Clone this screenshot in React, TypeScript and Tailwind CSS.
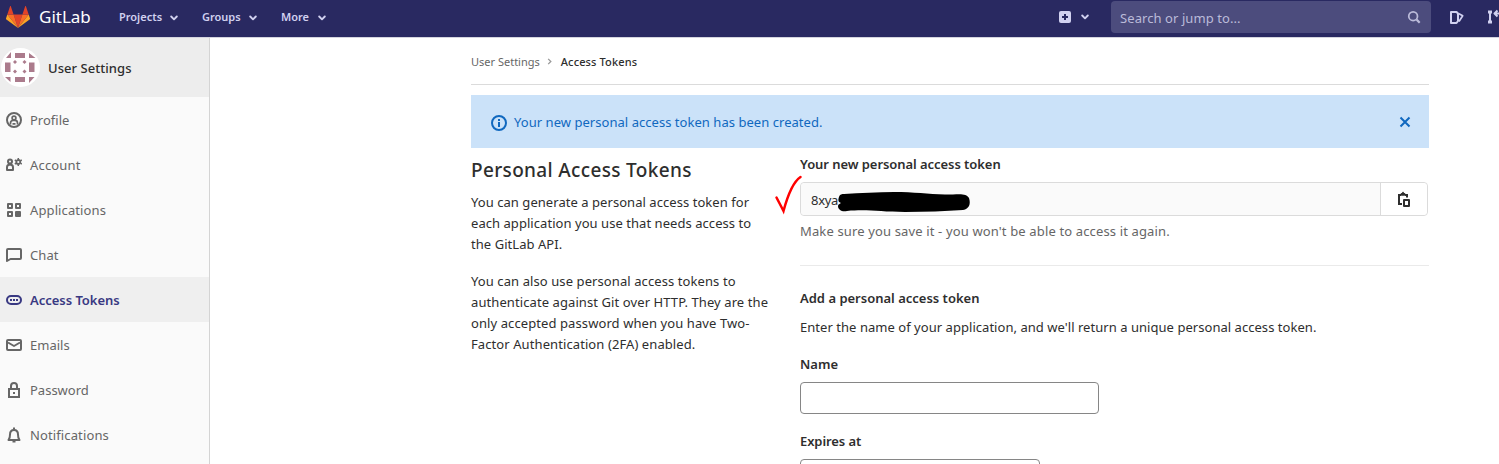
import React from 'react';

function Icon({ children, className = 'h-4 w-4' }: { children: React.ReactNode; className?: string }) {
  return (
    <svg viewBox="0 0 16 16" className={`shrink-0 ${className}`} fill="none" stroke="currentColor" strokeWidth="2" strokeLinejoin="round">
      {children}
    </svg>
  );
}

function Logo() {
  return (
    <svg viewBox="0 0 24 22" className="h-[22px] w-6 shrink-0">
      <path fill="#e24329" d="M12 22 16.4 8.4H7.6z" />
      <path fill="#fc6d26" d="M12 22 7.6 8.4H1.3z" />
      <path fill="#fca326" d="M1.3 8.4 0 12.5c-.1.4 0 .8.4 1L12 22z" />
      <path fill="#e24329" d="M1.3 8.4h6.3L4.9.4c-.2-.5-.8-.5-.9 0z" />
      <path fill="#fc6d26" d="m12 22 4.4-13.6h6.3z" />
      <path fill="#fca326" d="m22.700 8.400 1.300 4.100c.1.4 0 .8-.4 1L12 22z" />
      <path fill="#e24329" d="M22.700 8.400h-6.300L19.100.4c.2-.5.8-.5.9 0z" />
    </svg>
  );
}

function Avatar() {
  return (
    <span className="flex h-[39px] w-[39px] shrink-0 overflow-hidden rounded-full bg-white">
      <svg viewBox="0 0 39 39" className="h-full w-full" fill="#ab7b8c">
        <path d="M5 10 10 4v6zM14 5h10v5H14zM28 5l6.500 5H28zM4 14.500h5.500V24H4zM28 14.500h5.500V24H28zM14 29h10v5H14zM4 29h5.500v5zM28 29h5.500L28 35z" />
        <path d="m14 12 2 2-2 2-2-2zM23.500 12l2 2-2 2-2-2zM14 21.500l2 2-2 2-2-2zM23.500 21.500l2 2-2 2-2-2z" />
      </svg>
    </span>
  );
}

function Chevron() {
  return (
    <svg viewBox="0 0 8 6" className="h-1.5 w-2" fill="none" stroke="currentColor" strokeWidth="1.900" strokeLinecap="round" strokeLinejoin="round">
      <path d="m1.200 1.500 2.800 2.800 2.800-2.800" />
    </svg>
  );
}

const items = [
  {
    label: 'Profile',
    tracking: '',
    icon: (
      <Icon>
        <circle cx="8" cy="8" r="7" />
        <circle cx="8" cy="6" r="1.900" strokeWidth="1.700" />
        <path strokeWidth="1.700" d="M4.500 12.500V11c0-1.600 1.200-2.600 2.500-2.600h2c1.300 0 2.500 1 2.500 2.600v1.500M6.500 11.800h3" />
      </Icon>
    ),
  },
  {
    label: 'Account',
    tracking: 'tracking-[0.17px]',
    icon: (
      <Icon>
        <circle cx="4" cy="4.500" r="2" />
        <path d="M1 13V10.500C1 9 2 7.800 3.200 7.800h1.600C6 7.800 7 9 7 10.500V13z" />
        <circle cx="12.300" cy="5" r="2" strokeWidth="1.800" />
        <path strokeWidth="1.500" d="M12.300 1v1.500M12.300 7.500V9M8.800 3l1.400.8M14.400 6.200l1.400.8M8.800 7l1.400-.8M14.400 3.800l1.400-.8" />
      </Icon>
    ),
  },
  {
    label: 'Applications',
    tracking: 'tracking-[0.11px]',
    icon: (
      <Icon>
        <path d="M2 2h4v4H2zM10 2h4v4h-4zM2 10h4v4H2z" />
        <rect x="9" y="9" width="6" height="6" rx="1" fill="currentColor" stroke="none" />
      </Icon>
    ),
  },
  {
    label: 'Chat',
    tracking: 'tracking-[0.1px]',
    icon: (
      <Icon>
        <path d="M1 14V3c0-.6.4-1 1-1h12c.6 0 1 .4 1 1v8c0 .6-.4 1-1 1H4.500z" />
      </Icon>
    ),
  },
  {
    label: 'Access Tokens',
    tracking: '-tracking-[0.03px]',
    active: true,
    icon: (
      <Icon>
        <rect x="1" y="4" width="14" height="8" rx="4" />
        <path d="M4 8h2M7 8h2M10 8h2" />
      </Icon>
    ),
  },
  {
    label: 'Emails',
    tracking: '',
    icon: (
      <Icon>
        <rect x="1" y="3" width="14" height="10" rx="1" />
        <path d="m2 5.500 6 3.500 6-3.500" />
      </Icon>
    ),
  },
  {
    label: 'Password',
    tracking: '',
    icon: (
      <Icon>
        <path strokeLinejoin="miter" d="M3 7h10v8H3zM5 7V4a3 3 0 0 1 6 0v3" />
        <rect x="7" y="10" width="2" height="2" fill="currentColor" stroke="none" />
      </Icon>
    ),
  },
  {
    label: 'Notifications',
    tracking: 'tracking-[0.12px]',
    icon: (
      <Icon>
        <path d="M2.500 13c1.500-1.500 1.500-3.500 1.500-5.500C4 4.500 5.500 3 8 3s4 1.500 4 4.500c0 2 0 4 1.500 5.500z" />
        <path d="M8 .5v2M6.500 14.500h3" />
      </Icon>
    ),
  },
];

function Header() {
  return (
    <header className="flex h-[38px] shrink-0 items-start overflow-hidden border-b border-[#d4d4de] bg-[#292961] text-[#d1d1f0]">
      <div className="flex h-[34px] w-[119px] shrink-0 items-center gap-[9px] pl-1.5 text-white">
        <Logo />
        <span className="text-[17px]">GitLab</span>
      </div>
      <nav className="flex h-[35px] shrink-0 items-center text-[11px] font-semibold">
        <span className="flex w-[83px] items-center gap-2">Projects <Chevron /></span>
        <span className="flex w-[79px] items-center gap-2">Groups <Chevron /></span>
        <span className="flex items-center gap-[9px]">More <Chevron /></span>
      </nav>
      <div className="ml-auto flex h-[34px] shrink-0 items-center">
        <svg viewBox="0 0 12 12" className="h-3 w-3">
          <rect width="12" height="12" rx="2" fill="currentColor" />
          <path d="M6 3v6M3 6h6" stroke="#292961" strokeWidth="2" />
        </svg>
        <span className="ml-2.5 flex w-[30px]"><Chevron /></span>
      </div>
      <div className="mt-px flex h-8 w-80 shrink-0 items-center justify-between rounded bg-[#4c4c7d] pr-[10px] pl-[9px] text-[13px] tracking-[0.08px] text-[#bbbbd9]">
        <span className="pt-[3px]">Search or jump to...</span>
        <Icon className="h-[14px] w-[14px]">
          <circle cx="7" cy="7" r="5" />
          <path strokeWidth="2.500" d="m11 11 3.500 3.500" />
        </Icon>
      </div>
      <div className="flex h-[34px] w-[68px] shrink-0 items-center gap-[22px] overflow-hidden pl-[18px]">
        <Icon>
          <path d="M2 3h5.500L9 4.500V12l-1.500 2H2z" />
          <path strokeWidth="1.700" d="m9.500 4.500 4.200 2.200-3.700 5.800" />
        </Icon>
        <Icon>
          <path d="M3 3v10" />
          <path fill="currentColor" stroke="none" d="M1 1.500h4v3H1zM1 11.500h4v3H1z" />
          <path d="M7.500 4.500H12c1 0 1 .5 1 1V13M10.500 1.500l-3 3 3 3" />
        </Icon>
      </div>
    </header>
  );
}

function Sidebar() {
  return (
    <aside className="flex w-[210px] shrink-0 flex-col border-r border-[#d4d4d4] bg-[#fafafa]">
      <div className="flex h-[59px] shrink-0 items-center bg-[#ededed] pr-2 pl-px">
        <Avatar />
        <span className="pt-0.5 pl-2 text-[13px] font-medium tracking-[0.05px] text-[#2e2e2e]">User Settings</span>
      </div>
      {items.map((item) => (
        <a
          key={item.label}
          className={`flex h-[45px] shrink-0 items-center gap-2 pl-1.5 text-[13px] ${item.tracking} ${item.active ? 'bg-[#efefef] font-semibold text-[#393982]' : 'text-[#666]'}`}
        >
          {item.icon}
          <span className="pt-0.5">{item.label}</span>
        </a>
      ))}
    </aside>
  );
}

function TokenField() {
  return (
    <div className="relative mt-[7px] flex h-[34px] w-[628px] rounded border border-[#dbdbdb]">
      <div className="flex flex-1 items-center rounded-l bg-[#fafafa] pt-[3px] pl-2.5 tracking-[-0.3px]">8xya</div>
      <button className="flex w-[47px] items-center justify-center rounded-r border-l border-[#dbdbdb] bg-white" aria-label="Copy">
        <Icon>
          <path strokeLinejoin="miter" d="M6 13H3V4h2M9 4h2v2.500" />
          <path d="M5.500 4V2.800h1L7 1.500l.5 1.300h1V4z" strokeWidth="1.600" />
          <path d="M8 9h5v6H8z" />
        </Icon>
      </button>
      <svg viewBox="0 0 200 44" className="absolute -top-[10px] -left-[28px] h-11 w-[200px]" fill="none">
        <path d="M3.500 24.500C5.500 28.500 8 33 10.500 38C14 25 20 9 27.500 4" stroke="#f00" strokeWidth="2.500" strokeLinecap="round" />
        <path fill="#000" d="M71 21c16-1 34-2 50-2 20 0 34 2 51 2.500 14 0 21-2 24 3.500 2 6 0 11-6 12-18 1-37 2-58 2-25 0-37-3-58-1-5 1-9-1-9-5 0-2 2-2 3-3-3-1-3-3-2-6 1-3 3-3 5-3z" />
      </svg>
    </div>
  );
}

function Main() {
  return (
    <main className="w-[958px] shrink-0 text-[13px] leading-[21px] text-[#2e2e2e]">
      <nav className="flex h-[47px] items-center border-b border-[#dbdbdb] pt-px text-[11px]">
        <span className="text-[#666]">User Settings</span>
        <svg viewBox="0 0 5 8" className="mr-[9px] ml-[7px] h-[7px] w-[5px]" fill="none" stroke="#999" strokeWidth="1.500">
          <path d="m1 1 3 3-3 3" />
        </svg>
        <span className="font-medium tracking-[0.13px]">Access Tokens</span>
      </nav>
      <div className="mt-2.5 flex h-[53px] items-center bg-[#cbe2f9] pt-px pr-4 pl-5 text-[#1068bf]">
        <Icon className="mt-0.5 h-4 w-4">
          <circle cx="8" cy="8" r="7" />
          <path d="M8 7v5M8 4v2" />
        </Icon>
        <span className="flex-1 pt-px pl-[7px] tracking-[0.04px]">Your new personal access token has been created.</span>
        <Icon>
          <path d="m3.500 3.500 9 9M12.500 3.500l-9 9" />
        </Icon>
      </div>
      <div className="flex">
        <section className="w-[329px] shrink-0 pt-2">
          <h1 className="text-[19px] leading-[28px] font-medium tracking-[0.34px]">Personal Access Tokens</h1>
          <p className="mt-2 tracking-[0.05px]">
            You can generate a personal access token for<br />
            each application you use that needs access to<br />
            the GitLab API.
          </p>
          <p className="mt-4 tracking-[0.09px]">
            You can also use personal access tokens to<br />
            authenticate against Git over HTTP. They are the<br />
            only accepted password when you have Two-<br />
            Factor Authentication (2FA) enabled.
          </p>
        </section>
        <section className="flex-1 pt-1.5">
          <h2 className="font-semibold tracking-[-0.06px]">Your new personal access token</h2>
          <TokenField />
          <p className="mt-[5px] tracking-[0.14px] text-[#666]">Make sure you save it - you won't be able to access it again.</p>
          <hr className="mt-[23px] border-[#eaeaea]" />
          <h2 className="mt-[22px] font-semibold">Add a personal access token</h2>
          <p className="mt-2 tracking-[0.04px]">Enter the name of your application, and we'll return a unique personal access token.</p>
          <label className="mt-4 block font-semibold">Name</label>
          <input className="mt-[7px] block h-8 w-[299px] rounded border border-[#868686] bg-white" />
          <label className="mt-[17px] block font-semibold tracking-[-0.08px]">Expires at</label>
          <input className="mt-[7px] block h-8 w-60 rounded border border-[#868686] bg-white" />
        </section>
      </div>
    </main>
  );
}

export default function App() {
  return (
    <div className="flex h-screen flex-col overflow-hidden bg-white font-['Noto_Sans',sans-serif]">
      <Header />
      <div className="flex min-h-0 flex-1 overflow-hidden">
        <Sidebar />
        <div className="w-[261px] shrink-0" />
        <Main />
      </div>
    </div>
  );
}
